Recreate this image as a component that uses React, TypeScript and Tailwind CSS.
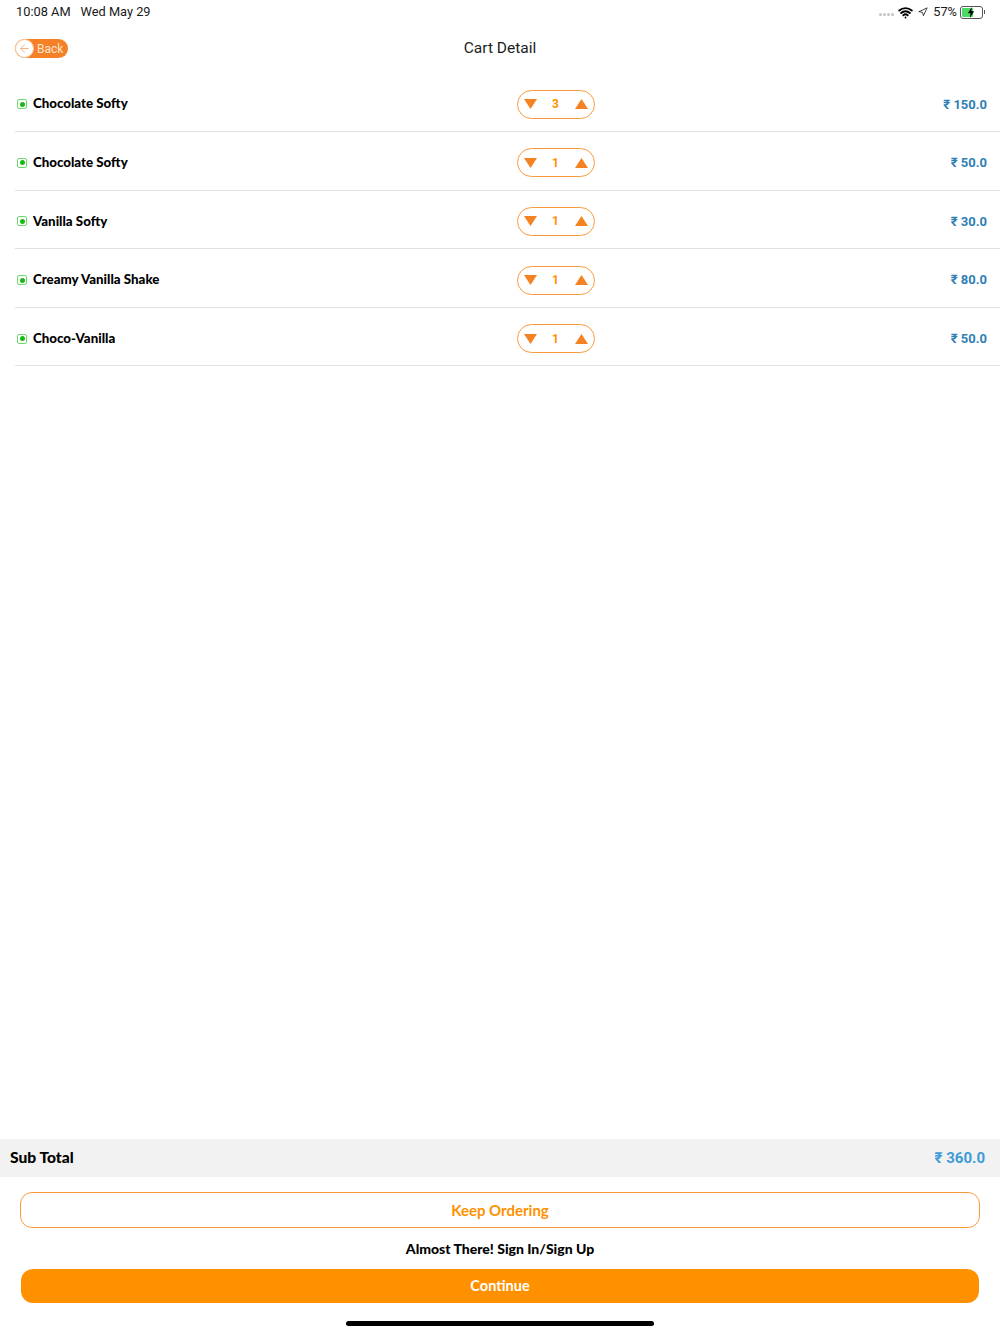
import { ArrowLeft, Navigation, Wifi } from "lucide-react";

const items = [
    { name: "Chocolate Softy", qty: 3, price: "₹ 150.0" },
    { name: "Chocolate Softy", qty: 1, price: "₹ 50.0" },
    { name: "Vanilla Softy", qty: 1, price: "₹ 30.0" },
    { name: "Creamy Vanilla Shake", qty: 1, price: "₹ 80.0" },
    { name: "Choco-Vanilla", qty: 1, price: "₹ 50.0" },
];

function StatusBar() {
    return (
        <div className="h-6 flex items-center justify-between pl-4 pr-[15px] text-[12.8px] text-[#1a1a1a] font-['Roboto',sans-serif]">
            <div className="flex gap-[10px]">
                <span>10:08 AM</span>
                <span>Wed May 29</span>
            </div>
            <div className="flex items-center">
                <span className="flex gap-[1px] mr-[4px] mt-1">
                    {[1, 2, 3, 4].map((i) => (
                        <span key={i} className="w-[3px] h-[3px] rounded-full bg-[#c4c4c4]" />
                    ))}
                </span>
                <Wifi size={15} strokeWidth={3} className="text-black" />
                <Navigation size={10} strokeWidth={2} className="ml-[5px] mr-[5px] text-[#222]" />
                <span>57%</span>
                <span className="ml-[3px] w-[23px] h-[13px] border border-[#555] rounded-[3px] p-[1px] flex relative">
                    <span className="w-[11px] bg-[#4cd964] rounded-[1px]" />
                    <svg viewBox="0 0 10 14" className="absolute left-[6px] top-[0px] w-[8px] h-[11px]">
                        <path d="M6 0 L1 8 H4.5 L3.5 14 L9 5.5 H5.5 Z" fill="#000" />
                    </svg>
                </span>
                <span className="w-[1px] h-1 bg-[#555] ml-[1px]" />
            </div>
        </div>
    );
}

function Header() {
    return (
        <div className="h-[49.5px] relative flex items-center justify-center">
            <div className="absolute left-[15px] top-[15px] w-[53px] h-[19px] rounded-full bg-[#f58025] flex items-center">
                <span className="w-[19px] h-[19px] rounded-full bg-white border border-[#fbc79f] flex items-center justify-center">
                    <ArrowLeft size={13} strokeWidth={1.5} className="text-[#f9a366]" />
                </span>
                <span className="ml-[3px] text-xs text-[#fde6d4] font-['Roboto',sans-serif]">Back</span>
            </div>
            <h1 className="text-[15.5px] text-[#1c1c1c] font-['Roboto',sans-serif]">Cart Detail</h1>
        </div>
    );
}

function Stepper({ qty }: { qty: number }) {
    return (
        <div className="w-[78px] h-[29px] border-[1.5px] border-[#fb9a3c] rounded-full flex items-center justify-between px-[6px]">
            <svg viewBox="0 0 13 10" className="w-[13px] h-[10px]">
                <path d="M0 0 H13 L6.5 10 Z" fill="#f58220" />
            </svg>
            <span className="text-xs font-bold text-[#ff9100] font-['Roboto',sans-serif] -ml-[1px]">{qty}</span>
            <svg viewBox="0 0 13 10" className="w-[13px] h-[10px]">
                <path d="M6.5 0 L13 10 H0 Z" fill="#f58220" />
            </svg>
        </div>
    );
}

function Row({ name, qty, price }: { name: string; qty: number; price: string }) {
    return (
        <div className="h-[58.6px] pt-[4px] ml-[15px] border-b border-[#e3e3e3] flex items-center relative">
            <span className="ml-[2px] w-[10px] h-[10px] rounded-[2px] border border-[#6fd86f] flex items-center justify-center">
                <span className="w-[5px] h-[5px] rounded-full bg-[#16b916]" />
            </span>
            <span className="ml-[6px] text-[13.3px] font-black text-black">{name}</span>
            <div className="absolute left-[502px]">
                <Stepper qty={qty} />
            </div>
            <span className="ml-auto mr-[13px] text-[13px] font-bold text-[#2f7fb5] font-['Roboto',sans-serif]">{price}</span>
        </div>
    );
}

export default function App() {
    return (
        <div className="h-[1334px] bg-white flex flex-col font-['Lato','Noto_Sans',sans-serif]">
            <StatusBar />
            <Header />
            <div className="flex-1">
                {items.map((item, i) => (
                    <Row key={i} {...item} />
                ))}
            </div>
            <div className="h-[38px] bg-[#f2f2f2] flex items-center justify-between pl-[10px] pr-[15px]">
                <span className="text-[15.6px] font-black text-black">Sub Total</span>
                <span className="text-[15px] font-bold text-[#3d9bd9] font-['Roboto',sans-serif]">₹ 360.0</span>
            </div>
            <div className="mt-[15px] mx-5 h-9 border border-[#fb9a3c] rounded-xl flex items-center justify-center text-[15px] font-bold text-[#ff9100]">
                Keep Ordering
            </div>
            <div className="h-[41px] flex items-center justify-center text-[14px] font-black text-black">
                Almost There! Sign In/Sign Up
            </div>
            <div className="mx-[21px] h-[34px] rounded-xl bg-[#ff9100] flex items-center justify-center text-[14.5px] font-bold text-white">
                Continue
            </div>
            <div className="h-[31px] flex justify-center pt-[18px]">
                <div className="w-[308px] h-[5px] rounded-full bg-black" />
            </div>
        </div>
    );
}
